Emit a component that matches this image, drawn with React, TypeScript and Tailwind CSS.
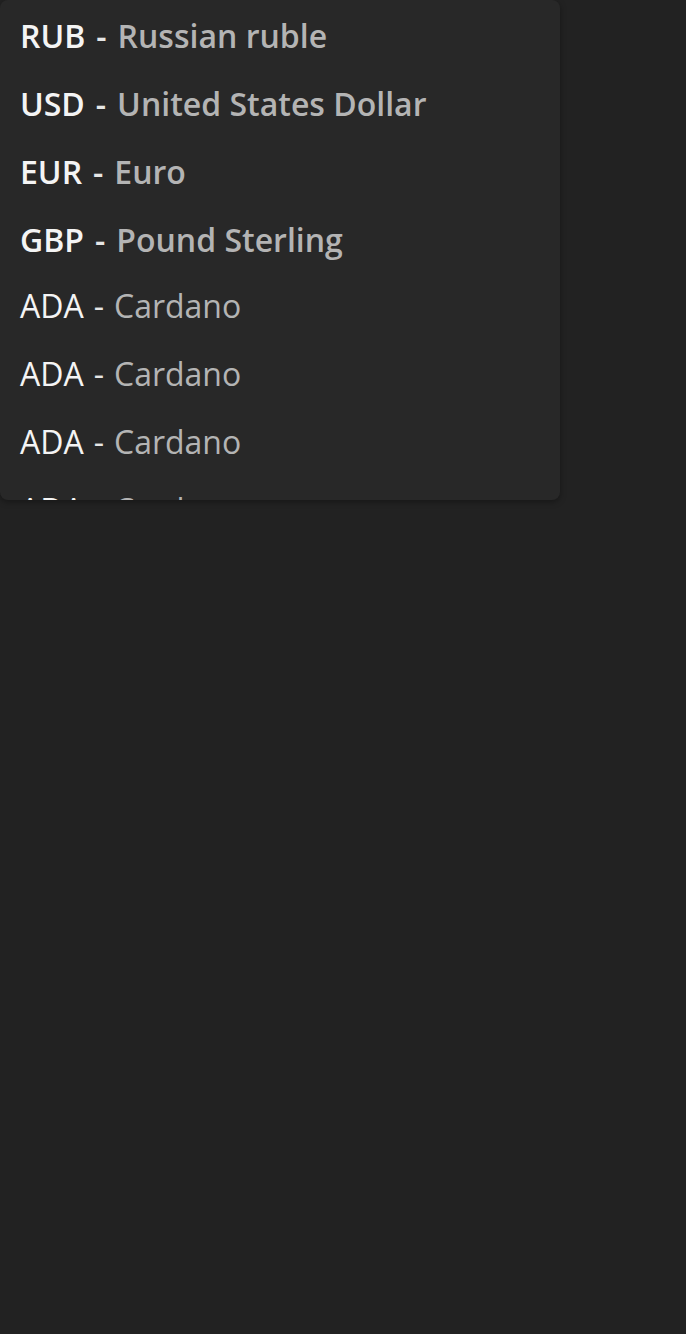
const ITEMS = [
  { code: 'RUB', name: 'Russian ruble', strong: true },
  { code: 'USD', name: 'United States Dollar', strong: true },
  { code: 'EUR', name: 'Euro', strong: true },
  { code: 'GBP', name: 'Pound Sterling', strong: true },
  { code: 'ADA', name: 'Cardano', strong: false },
  { code: 'ADA', name: 'Cardano', strong: false },
  { code: 'ADA', name: 'Cardano', strong: false },
  { code: 'ADA', name: 'Cardano', strong: false },
  { code: 'ADA', name: 'Cardano', strong: false },
];

export default function App() {
  return (
    <div className="min-h-[1334px] w-full bg-[#222222] font-['Open_Sans',sans-serif]">
      <div className="w-[560px] h-[500px] overflow-hidden rounded-lg bg-[#282828] shadow-[0_2px_6px_rgba(0,0,0,0.35)]">
        <ul>
          {ITEMS.map((it, i) => (
            <li
              key={i}
              className={`flex h-[68px] items-center px-5 text-[32px] leading-none ${it.strong ? 'pt-[4px] font-semibold' : 'font-normal'}`}
            >
              <span className="text-[#f4f4f4]">{it.code}</span>
              <span className={`text-[#e6e6e6] ${it.strong ? 'mx-[11px]' : 'mx-[10px]'}`}>-</span>
              <span className="text-[#b4b4b4]">{it.name}</span>
            </li>
          ))}
        </ul>
      </div>
    </div>
  );
}
